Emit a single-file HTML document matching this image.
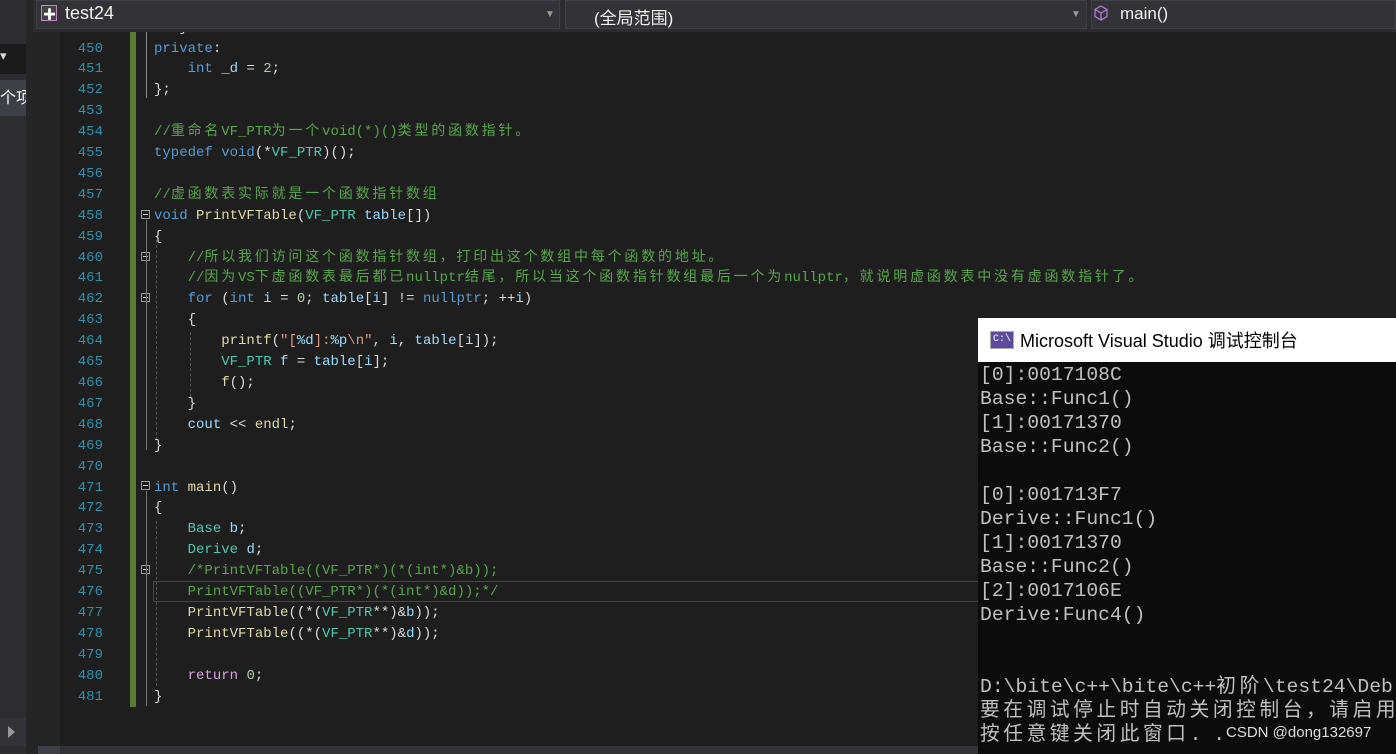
<!DOCTYPE html>
<html><head><meta charset="utf-8"><style>
*{margin:0;padding:0;box-sizing:border-box}
body{width:1396px;height:754px;overflow:hidden;background:#1e1e1e;position:relative;font-family:"Liberation Sans","Noto Sans CJK SC",sans-serif}
.abs{position:absolute}
.code{position:absolute;left:154px;top:17.6px;font-family:"Liberation Mono","Noto Sans CJK SC",monospace;font-size:14px;line-height:20.9px;color:#dcdcdc;white-space:pre}
.nums{position:absolute;left:60px;width:43px;top:17.6px;font-family:"Liberation Mono",monospace;font-size:14px;line-height:20.9px;color:#2b91af;text-align:right;white-space:pre}
.k{color:#569cd6}.t{color:#4ec9b0}.f{color:#dcdcaa}.c{color:#57a64a}.s{color:#d69d85}.n{color:#b5cea8}.v{color:#9cdcfe}.r{color:#d8a0df}
.z{letter-spacing:2.8px}
.zc{letter-spacing:3.6px}
.con{position:absolute;left:980px;top:363px;font-family:"Liberation Mono","Noto Sans CJK SC",monospace;font-size:19.7px;line-height:24px;color:#c0c0c0;white-space:pre}
.box{position:absolute;width:9px;height:9px;border:1px solid #999;background:#1e1e1e}
.box:after{content:"";position:absolute;left:1px;top:3px;width:5px;height:1px;background:#ccc}
.top{z-index:5}
</style></head><body>
<div class="abs" style="left:0;top:0;width:38px;height:754px;background:#2d2d30"></div>
<div class="abs" style="left:0;top:44px;width:26px;height:30px;background:#1b1b1c"></div>
<div class="abs" style="left:0;top:80px;width:26px;height:36px;background:#3f3f46"></div>
<div class="abs" style="left:0;top:84px;color:#fff;font-size:16px">个项</div>
<div class="abs" style="left:0;top:48px;color:#ddd;font-size:13px">▾</div>
<div class="abs" style="left:26px;top:0;width:12px;height:754px;background:#252526"></div>
<div class="abs" style="left:38px;top:30px;width:22px;height:724px;background:#252526"></div>
<div class="abs" style="left:0;top:718px;width:26px;height:28px;background:#333337"></div>
<div class="abs" style="left:8px;top:726px;width:0;height:0;border-left:7px solid #999;border-top:6px solid transparent;border-bottom:6px solid transparent"></div>
<!-- gutter -->
<div class="abs" style="left:130px;top:32px;width:6px;height:675px;background:#5b7a35"></div>
<div class="nums">449
450
451
452
453
454
455
456
457
458
459
460
461
462
463
464
465
466
467
468
469
470
471
472
473
474
475
476
477
478
479
480
481</div>
<div class="box" style="left:141px;top:210px"></div>
<div class="box" style="left:141px;top:252px"></div>
<div class="box" style="left:141px;top:293px"></div>
<div class="box" style="left:141px;top:481px"></div>
<div class="box" style="left:141px;top:565px"></div>
<div class="abs" style="left:146px;top:32px;width:1px;height:66px;background:#888"></div>
<div class="abs" style="left:146px;top:220px;width:1px;height:230px;background:#777"></div>
<div class="abs" style="left:146px;top:491px;width:1px;height:215px;background:#777"></div>
<div class="abs" style="left:156px;top:240px;width:0;height:200px;border-left:1px dashed #555"></div>
<div class="abs" style="left:156px;top:521px;width:0;height:165px;border-left:1px dashed #555"></div>
<div class="abs" style="left:190px;top:332px;width:0;height:65px;border-left:1px dashed #555"></div>
<div class="abs" style="left:153px;top:581px;width:830px;height:21px;border:1px solid #464646"></div>
<div class="code">   }
<span class="k">private</span>:
    <span class="k">int</span> <span class="v">_d</span> = <span class="n">2</span>;
};

<span class="c">//<span class="z">重命名</span>VF_PTR<span class="z">为一个</span>void(*)()<span class="z">类型的函数指针。</span></span>
<span class="k">typedef</span> <span class="k">void</span>(*<span class="t">VF_PTR</span>)();

<span class="c">//<span class="z">虚函数表实际就是一个函数指针数组</span></span>
<span class="k">void</span> <span class="f">PrintVFTable</span>(<span class="t">VF_PTR</span> <span class="v">table</span>[])
{
    <span class="c">//<span class="z">所以我们访问这个函数指针数组，打印出这个数组中每个函数的地址。</span></span>
    <span class="c">//<span class="z">因为</span>VS<span class="z">下虚函数表最后都已</span>nullptr<span class="z">结尾，所以当这个函数指针数组最后一个为</span>nullptr<span class="z">，就说明虚函数表中没有虚函数指针了。</span></span>
    <span class="k">for</span> (<span class="k">int</span> <span class="v">i</span> = <span class="n">0</span>; <span class="v">table</span>[<span class="v">i</span>] != <span class="k">nullptr</span>; ++<span class="v">i</span>)
    {
        <span class="f">printf</span>(<span class="s">"[</span><span class="v">%d</span><span class="s">]:</span><span class="v">%p</span><span class="s">\n"</span>, <span class="v">i</span>, <span class="v">table</span>[<span class="v">i</span>]);
        <span class="t">VF_PTR</span> <span class="v">f</span> = <span class="v">table</span>[<span class="v">i</span>];
        <span class="f">f</span>();
    }
    <span class="v">cout</span> &lt;&lt; <span class="f">endl</span>;
}

<span class="k">int</span> <span class="f">main</span>()
{
    <span class="t">Base</span> <span class="v">b</span>;
    <span class="t">Derive</span> <span class="v">d</span>;
    <span class="c">/*PrintVFTable((VF_PTR*)(*(int*)&amp;b));</span>
    <span class="c">PrintVFTable((VF_PTR*)(*(int*)&amp;d));*/</span>
    <span class="f">PrintVFTable</span>((*(<span class="t">VF_PTR</span>**)&amp;<span class="v">b</span>));
    <span class="f">PrintVFTable</span>((*(<span class="t">VF_PTR</span>**)&amp;<span class="v">d</span>));

    <span class="r">return</span> <span class="n">0</span>;
}</div>
<!-- top bar -->
<div class="abs top" style="left:33px;top:0;width:1363px;height:32px;background:#2d2d30"></div>
<div class="abs top" style="left:36px;top:0;width:524px;height:29px;background:#333337;border:1px solid #3f3f46"></div>
<div class="abs top" style="left:41px;top:5px;width:16px;height:16px;border:1px solid #c586c0;background:#444"></div>
<div class="abs top" style="left:43px;top:4px;color:#fff;font-size:13px;font-weight:bold">✚</div>
<div class="abs top" style="left:65px;top:3px;color:#f1f1f1;font-size:18px">test24</div>
<div class="abs top" style="left:545px;top:9px;color:#999;font-size:10px">▼</div>
<div class="abs top" style="left:565px;top:0;width:522px;height:29px;background:#333337;border:1px solid #3f3f46"></div>
<div class="abs top" style="left:594px;top:4px;color:#f1f1f1;font-size:17px">(全局范围)</div>
<div class="abs top" style="left:1071px;top:9px;color:#999;font-size:10px">▼</div>
<div class="abs top" style="left:1091px;top:0;width:305px;height:29px;background:#333337;border:1px solid #3f3f46"></div>
<svg class="abs top" style="left:1094px;top:5px" width="14" height="16"><path d="M7 1L13 4.5V11.5L7 15L1 11.5V4.5Z M1 4.5L7 8L13 4.5 M7 8V15" fill="none" stroke="#b180d7" stroke-width="1.2"/></svg>
<div class="abs top" style="left:1120px;top:4px;color:#f1f1f1;font-size:17px">main()</div>
<div class="abs" style="left:60px;top:746px;width:1336px;height:8px;background:#333337"></div>
<div class="abs" style="left:38px;top:746px;width:22px;height:8px;background:#3f3f46"></div>
<!-- console -->
<div class="abs" style="left:978px;top:318px;width:418px;height:436px;background:#0c0c0c;z-index:6"></div>
<div class="abs" style="left:978px;top:318px;width:418px;height:44px;background:#fff;z-index:6"></div>
<div class="abs" style="left:990px;top:331px;width:24px;height:18px;background:#5c4a9c;border:1px solid #aaa;color:#fff;font-size:10px;font-family:'Liberation Mono',monospace;line-height:16px;text-align:center;z-index:7">C:\</div>
<div class="abs" style="left:1020px;top:327px;color:#000;font-size:18px;z-index:7">Microsoft Visual Studio 调试控制台</div>
<div class="con" style="z-index:7">[0]:0017108C
Base::Func1()
[1]:00171370
Base::Func2()

[0]:001713F7
Derive::Func1()
[1]:00171370
Base::Func2()
[2]:0017106E
Derive:Func4()


D:\bite\c++\bite\c++<span class="zc">初阶</span>\test24\Deb
<span class="zc">要在调试停止时自动关闭控制台，请启用</span>
<span class="zc">按任意键关闭此窗口</span>. . .</div>
<div class="abs" style="left:1226px;top:724px;color:#ddd;font-size:15px;background:#0c0c0c;z-index:8;padding-right:20px">CSDN @dong132697</div>
</body></html>
